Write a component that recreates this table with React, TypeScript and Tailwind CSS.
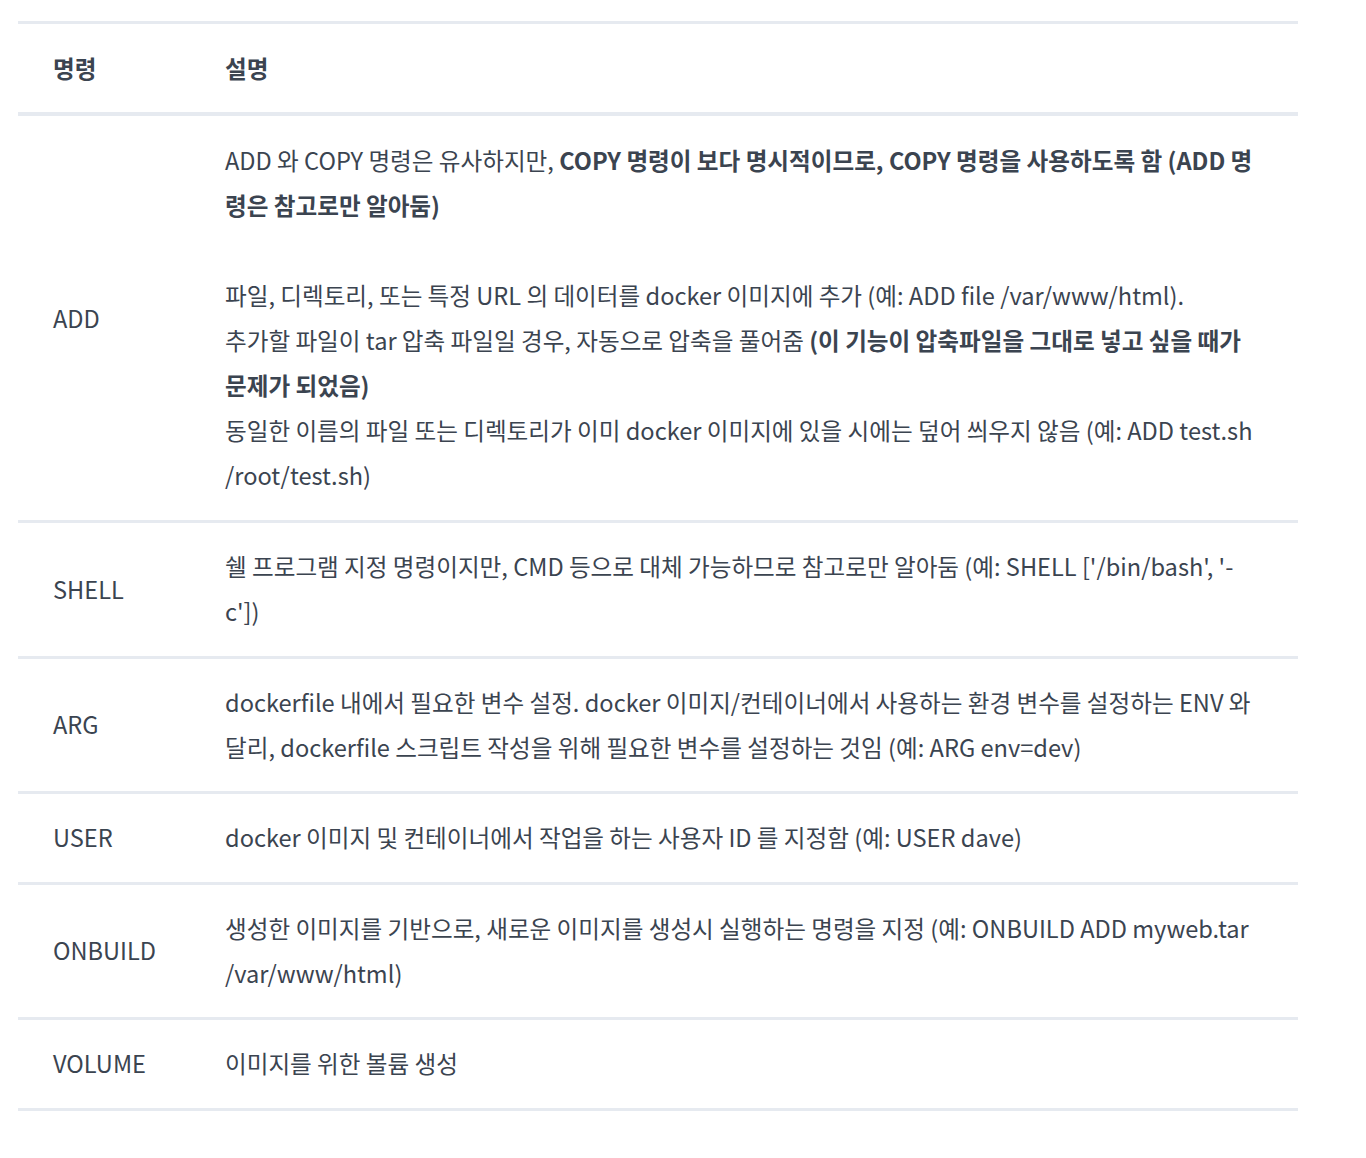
import React from 'react';

interface Row {
  cmd: string;
  desc: React.ReactNode;
  tall?: boolean;
}

const rows: Row[] = [
  {
    cmd: 'ADD',
    tall: true,
    desc: (
      <>
        <p>
          ADD 와 COPY 명령은 유사하지만,{' '}
          <strong className="font-bold">
            COPY 명령이 보다 명시적이므로, COPY 명령을 사용하도록 함 (ADD 명령은 참고로만 알아둠)
          </strong>
        </p>
        <p>&nbsp;</p>
        <p>파일, 디렉토리, 또는 특정 URL 의 데이터를 docker 이미지에 추가 (예: ADD file /var/www/html).</p>
        <p>
          추가할 파일이 tar 압축 파일일 경우, 자동으로 압축을 풀어줌{' '}
          <strong className="font-bold">(이 기능이 압축파일을 그대로 넣고 싶을 때가 문제가 되었음)</strong>
        </p>
        <p>동일한 이름의 파일 또는 디렉토리가 이미 docker 이미지에 있을 시에는 덮어 씌우지 않음 (예: ADD test.sh /root/test.sh)</p>
      </>
    ),
  },
  {
    cmd: 'SHELL',
    desc: "쉘 프로그램 지정 명령이지만, CMD 등으로 대체 가능하므로 참고로만 알아둠 (예: SHELL ['/bin/bash', '-c'])",
  },
  {
    cmd: 'ARG',
    desc: 'dockerfile 내에서 필요한 변수 설정. docker 이미지/컨테이너에서 사용하는 환경 변수를 설정하는 ENV 와 달리, dockerfile 스크립트 작성을 위해 필요한 변수를 설정하는 것임 (예: ARG env=dev)',
  },
  {
    cmd: 'USER',
    desc: 'docker 이미지 및 컨테이너에서 작업을 하는 사용자 ID 를 지정함 (예: USER dave)',
  },
  {
    cmd: 'ONBUILD',
    desc: '생성한 이미지를 기반으로, 새로운 이미지를 생성시 실행하는 명령을 지정 (예: ONBUILD ADD myweb.tar /var/www/html)',
  },
  {
    cmd: 'VOLUME',
    desc: '이미지를 위한 볼륨 생성',
  },
];

export default function App() {
  return (
    <div
      className="min-h-[1158px] bg-white pt-[21px] text-[#3b4450]"
      style={{ fontFamily: '"Noto Sans CJK KR", "Noto Sans", sans-serif' }}
    >
      <div className="ml-[18px] w-[1280px] border-t-[3px] border-[#e6eaf0]">
        {/* Header */}
        <div className="grid grid-cols-[172px_1fr] border-b-[4px] border-[#e6eaf0] text-[23.6px] leading-[45px] font-bold">
          <div className="px-[35px] py-[21.5px]">명령</div>
          <div className="px-[35px] py-[21.5px]">설명</div>
        </div>

        {/* Body */}
        {rows.map((row) => (
          <div
            key={row.cmd}
            className={`grid grid-cols-[172px_1fr] border-b-[3px] border-[#e6eaf0] text-[23.6px] leading-[45px] ${
              row.tall ? 'py-[22px]' : 'py-[21.25px]'
            }`}
          >
            <div className="flex items-center px-[35px]">{row.cmd}</div>
            <div className="px-[35px]">{row.desc}</div>
          </div>
        ))}
      </div>
    </div>
  );
}
